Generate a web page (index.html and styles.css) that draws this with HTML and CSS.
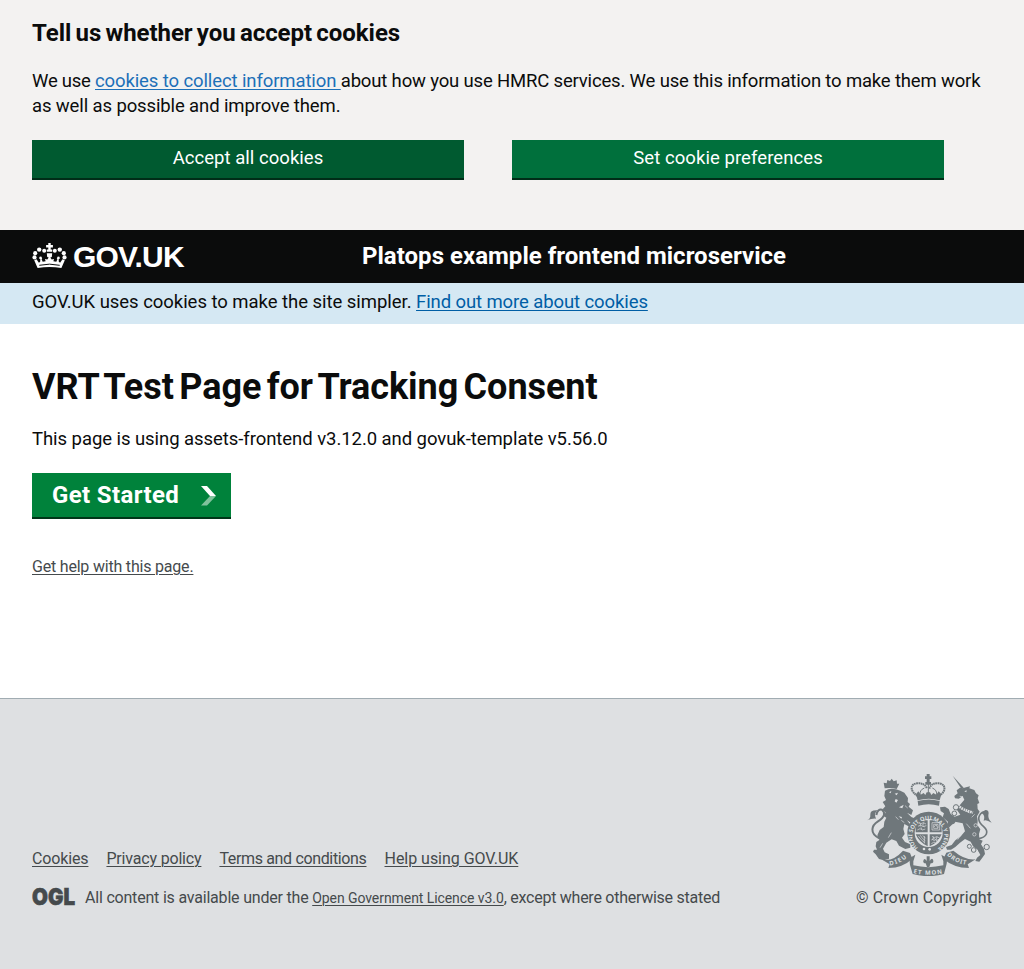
FILE: index.html
```html
<!DOCTYPE html>
<html lang="en">
<head>
<meta charset="utf-8">
<title>VRT Test Page for Tracking Consent</title>
<link rel="stylesheet" href="styles.css">
</head>
<body>
<section class="consent">
  <h2 class="consent-title">Tell us whether you accept cookies</h2>
  <p class="consent-text"><span class="t-weuse">We use </span><a class="consent-link" href="#">cookies to collect information </a><span class="t-about">about how you use HMRC services. We use this information to make them work</span><br><span class="t-aswell">as well as possible and improve them.</span></p>
  <div class="consent-actions">
    <button class="consent-button consent-button-active"><span class="t-accept">Accept all cookies</span></button>
    <button class="consent-button"><span class="t-set">Set cookie preferences</span></button>
  </div>
</section>
<header class="header">
  <a class="logo" href="#">
    <svg class="crown" viewBox="0 0 35 26" width="35" height="26" fill="#fff">
      <circle cx="2.500" cy="14.400" r="2.100"/><circle cx="3.200" cy="10.200" r="2.100"/><circle cx="7.200" cy="6.600" r="2.200"/><circle cx="12.200" cy="7.800" r="2"/>
      <circle cx="32.500" cy="14.400" r="2.100"/><circle cx="31.800" cy="10.200" r="2.100"/><circle cx="27.800" cy="6.600" r="2.200"/><circle cx="22.800" cy="7.800" r="2"/>
      <path d="M16.300 0h2.400v2h2.200v2.400h-2.200v2.200h1.500v2.200h-5.400V6.600h1.500V4.400h-2.200V2h2.200z"/>
      <path d="M5.600 25 2.200 17.200 4.500 16.300 6.900 19.700 8.200 18.700 8.300 16.100 7 15.600 7.600 13.800 9.200 13.500 10.200 15.300 9.600 16.300 10.700 18.800 13.600 18.200 13 16 15.300 16.400 16.700 14.400 15.200 13.900 14.800 10.200H20.200L19.800 13.900 18.300 14.400 19.700 16.400 22 16 21.400 18.200 24.300 18.800 25.400 16.300 24.800 15.300 25.800 13.500 27.400 13.800 28 15.600 26.700 16.100 26.800 18.700 28.100 19.700 30.500 16.300 32.800 17.200 29.400 25Q17.500 23.200 5.600 25z"/>
      <path d="M7.300 22.300Q17.500 20 27.700 22.300" fill="none" stroke="#0b0c0c" stroke-width="1"/>
    </svg>
    <span class="logo-text">GOV.UK</span>
  </a>
  <span class="service">Platops example frontend microservice</span>
</header>
<div class="cookie-bar"><p class="cookie-text"><span class="t-uses">GOV.UK uses cookies to make the site simpler. </span><a class="cookie-link" href="#">Find out more about cookies</a></p></div>
<main class="main">
  <h1 class="title">VRT Test Page for Tracking Consent</h1>
  <p class="lede">This page is using assets-frontend v3.12.0 and govuk-template v5.56.0</p>
  <a class="start" href="#"><span class="start-text">Get Started</span>
    <svg class="chevron" viewBox="0 0 16 20" width="16" height="20"><path d="M1 0h6l9 10H10z" fill="#fff"/><path d="M10 10h6L7 19.500H1z" fill="#80c29c"/></svg>
  </a>
  <p class="help"><a class="help-link" href="#">Get help with this page.</a></p>
</main>
<footer class="footer">
  <div class="footer-meta">
    <nav class="footer-nav">
      <a class="f-cookies" href="#">Cookies</a><a class="f-privacy" href="#">Privacy policy</a><a class="f-terms" href="#">Terms and conditions</a><a class="f-help" href="#">Help using GOV.UK</a>
    </nav>
    <div class="licence">
      <svg class="ogl" viewBox="0 0 43 18" width="43" height="18"><text class="ogl-text" x="0" y="16.500" textLength="43" lengthAdjust="spacingAndGlyphs">OGL</text></svg>
      <p class="licence-text"><span class="t-all">All content is available under the </span><a class="licence-link" href="#">Open Government Licence v3.0</a><span class="t-except">, except where otherwise stated</span></p>
    </div>
  </div>
  <a class="copyright" href="#">
    <svg class="crest" viewBox="51 42 375 306" width="125" height="102">
      <defs>
        <path id="motto" d="M204 264A48 48 0 1 1 266 264"/>
        <path id="dieu" d="M119 316Q152 312 176 287"/>
        <path id="mon" d="M190 339Q235 350 280 339"/>
        <path id="droit" d="M290 285Q316 312 356 315"/>
      </defs>
      <g class="ink">
        <!-- imperial crown -->
        <path d="M230 42h9v7h5v8h-5v9h4v8h-17v-8h4v-9h-5v-8h5z"/>
        <path class="beads" d="M203 108C180 94 178 72 202 70Q224 68 231 86M267 108C290 94 288 72 266 70Q244 68 238 86"/>
        <path class="line4" d="M235 72V106M210 106Q208 90 223 84M260 106Q262 90 247 84"/>
        <path d="M198 103l7-9 7 10 9-5 5 6 4-8h10l4 8 6-6 9 5 7-10 8 9-5 18q-33-10-66 0zM203 123q33-9 66 0l-2 14q-31-9-62 0z"/>
        <!-- lion -->
        <path d="M104 85l-3-17 9 2 2-10 8 3 5-7 6 8 9-3 1 10 7 0-8 16q-18-5-36-2z"/>
        <path d="M105 92Q124 80 151 92L163 98 174 114 173 126 180 132 176 140 189 151 184 165 171 158 184 171 193 175 185 190 171 181 182 195 181 202 163 192 160 207 164 222 156 233 165 246 181 253 181 263 166 267 147 257 139 243 125 238 109 248 99 266 104 277 117 283 117 296 102 301 87 297 77 283 69 275 72 269 81 269 77 259 79 246 88 240 82 226 89 210 101 201 103 185 109 173 99 167 107 158 98 148 106 139 98 126 108 120 103 108z"/>
        <path class="line6" d="M88 235C57 219 65 196 84 184C106 170 106 157 96 149Q83 146 79 165"/>
        <path d="M51 181Q62 177 61 164Q60 149 84 151Q70 158 78 176Q66 175 51 181z"/>
        <!-- unicorn -->
        <path d="M308 47l33 36-6 5z"/>
        <path d="M320 91l10-8 8 2 10-3 12-3-2 6 15 5 5 10 8 6-3 9 5 14-6 3 1 15 6 8-8 14 2 13-1 13 9 13-4 14 1 16 10 4-5 11 9 14 3 15-9 13-8 10-12-2 5-10 10-8-8-16-14-10-7-14-17-8-15 11-14 13-13 8-12 0-3-8 17-6 11-14 17-13 12-14-7-24-23-5-17 17-7-7 3-10-16-13 4-12-10-7-2-11 15-2 11 7 6 15 12 8 17-6-10-14 7-13 15-18-5-10-12 7-11-1-2-7 10-8z"/>
        <path class="line5" d="M385 236C411 232 418 215 401 200C382 185 382 168 397 157Q412 153 408 172"/>
        <path d="M425 188Q408 177 401 182Q407 165 394 158L406 150Q419 150 415 166Q414 177 425 188z"/>
        <!-- garter and ribbon -->
        <circle cx="236" cy="219" r="64"/>
        <path d="M94 298Q128 307 159 272L180 279 187 296Q159 323 115 324L119 313z"/>
        <path d="M377 298Q346 302 310 272L289 278 280 296Q310 323 357 324L353 313z"/>
        <path d="M178 295L196 284 190 304 190 316Q235 327 280 316L280 304 274 284 292 295 290 311 282 342Q235 355 188 342L180 315z"/>
      </g>
      <g class="paper">
        <path d="M117 97l7-4-2 7zM134 101l10-3-4 8zM137 117l7 3-5 8-5-4zM147 142l14-8-4 11zM154 176l-8-7 10 2zM343 94l7-3-1 6z"/>
        <circle cx="236" cy="219" r="42"/>
      </g>
      <g class="ink">
        <path d="M200 181h33v36h-36Q195 198 200 181zM239 181h32Q276 197 275 217H239zM197 223h36v36Q208 248 197 223zM239 223h36Q263 250 239 259z"/>
        <path d="M230 289h9v14q8-13 11-1 1 8-8 8l-4 11h-7l-4-11q-9-1-7-8 3-11 10 1z"/>
      </g>
      <g class="engraving">
        <path d="M206 187l7 4 7-3 8 4M204 199l7-4 8 5 10-3M202 210l8-4 7 4 9-3M208 188l5 7-3 5M221 188l-3 8 6 5M213 202l3 6M246 188h23v22h-23zM251 193h13v12h-13zM252 201l6-7 5 9M205 228q8 12 19 20M211 226q6 11 15 16M218 226l9 9M223 250V228M246 229l7 4 7-3 9 4M244 240l8-4 8 5 8-3M244 251l7-4 8 3M251 230l-3 9 7 4M261 230l-3 10 4 8"/>
        <path d="M137 170l8 9M154 181l9 7M165 137l8 7M124 218l-9 15M329 109l10 1M348 151l10 8M349 191l12 14M374 163l-9 9M332 227l-9 12M98 250l-8 13"/>
        <path class="collar" d="M324 136Q337 150 369 158"/>
        <circle cx="377" cy="196" r="5"/><circle cx="373" cy="223" r="5"/>
      </g>
      <g class="chain"><circle cx="318" cy="142" r="8"/><circle cx="313" cy="160" r="7"/><circle cx="308" cy="184" r="7"/><circle cx="358" cy="259" r="6"/><circle cx="371" cy="270" r="7"/><circle cx="392" cy="269" r="7"/><circle cx="410" cy="261" r="8"/></g>
      <g class="crest-text">
        <text class="motto"><textPath href="#motto" textLength="238">HONI SOIT QUI MAL Y PENSE</textPath></text>
        <text><textPath href="#dieu" textLength="57">DIEU</textPath></text>
        <text><textPath href="#mon" textLength="88">ET MON</textPath></text>
        <text><textPath href="#droit" textLength="66">DROIT</textPath></text>
        <circle cx="222" cy="267" r="4"/><circle cx="239" cy="268" r="4"/>
      </g>
    </svg>
    <span class="copyright-text">© Crown Copyright</span>
  </a>
</footer>
</body>
</html>
```
FILE: styles.css
```css
* { box-sizing: border-box; }
body { margin: 0; background: #fff; color: #0b0c0c; font-family: Roboto, "Noto Sans", sans-serif; font-size: 18.500px; line-height: 25px; white-space: nowrap; }
h1, h2, p { margin: 0; }
.consent { height: 230px; padding: 18px 32px 0; background: #f3f2f1; }
.consent-title { height: 30px; font: 700 24px/30px Roboto, sans-serif; letter-spacing: -0.050px; word-spacing: -1.600px; }
.consent-text { margin-top: 21px; height: 50px; }
.t-weuse { letter-spacing: -0.240px; }
.consent-link { color: #1d70b8; letter-spacing: -0.110px; text-decoration-thickness: 1px; text-underline-offset: 2px; }
.t-about { letter-spacing: -0.165px; }
.t-aswell { letter-spacing: -0.120px; }
.t-set { letter-spacing: 0.070px; }
.t-accept { letter-spacing: 0.030px; }
.consent-actions { display: flex; gap: 48px; margin-top: 21px; }
.consent-button { width: 432px; height: 40px; padding: 0 0 2px; border: 0; border-bottom: 2px solid #002d18; background: #00703c; color: #fff; font: inherit; line-height: 25px; }
.consent-button-active { background: #005a30; }
.header { display: flex; height: 53px; padding: 0 32px; background: #0b0c0c; color: #fff; }
.logo { display: flex; width: 330px; gap: 6px; color: #fff; text-decoration: none; }
.crown { margin-top: 13px; }
.logo-text { font: 700 30px/53px "Liberation Sans", sans-serif; letter-spacing: -0.800px; }
.service { font: 700 24px/53px Roboto, sans-serif; letter-spacing: 0.020px; }
.cookie-bar { height: 41px; padding: 7px 32px 0; background: #d5e8f3; }
.t-uses { letter-spacing: -0.040px; }
.cookie-link { color: #005ea5; letter-spacing: -0.100px; text-decoration-thickness: 1px; text-underline-offset: 2px; }
.main { height: 374px; padding: 42px 32px 0; }
.title { height: 42px; font: 700 36px/42px Roboto, sans-serif; letter-spacing: -0.050px; word-spacing: -3.500px; }
.lede { margin-top: 19px; height: 25px; letter-spacing: -0.060px; }
.start { display: flex; width: 199px; height: 46px; margin-top: 21px; padding: 0 15px 0 20px; justify-content: space-between; border-bottom: 2px solid #003618; background: #00823b; color: #fff; text-decoration: none; font: 700 24px/44px Roboto, sans-serif; }
.start-text { letter-spacing: 0.360px; }
.chevron { margin-top: 13px; }
.help { margin-top: 36px; font-size: 16px; line-height: 24px; letter-spacing: -0.200px; }
.help-link { color: #454a4d; text-decoration-thickness: 1px; text-underline-offset: 2px; }
.footer { display: flex; justify-content: space-between; height: 271px; padding: 75px 32px 0; border-top: 1px solid #a1acb2; background: #dee0e2; color: #454a4c; font-size: 16px; line-height: 20px; }
.footer-meta { padding-top: 75px; }
.footer a { color: #454a4c; text-decoration-thickness: 1px; text-underline-offset: 2px; }
.footer-nav { display: flex; gap: 18px; }
.f-cookies { letter-spacing: -0.140px; }
.f-privacy { letter-spacing: -0.180px; }
.f-terms { letter-spacing: -0.350px; }
.f-help { letter-spacing: -0.030px; }
.licence { display: flex; gap: 10px; margin-top: 19px; }
.ogl { overflow: visible; }
.ogl-text { font: 900 23px Inter, sans-serif; fill: #454a4c; stroke: #454a4c; stroke-width: 0.600px; }
.t-all { letter-spacing: -0.200px; }
.t-except { letter-spacing: -0.260px; }
.licence-link { font-size: 14px; letter-spacing: -0.070px; }
.footer .copyright { display: flex; flex-direction: column; align-items: flex-end; width: 136px; text-decoration: none; }
.copyright-text { margin-top: 12px; letter-spacing: 0.090px; }
.ink { fill: #6f777b; stroke: none; }
.paper { fill: #dee0e2; }
.beads, .line4, .line5, .line6, .chain, .engraving { fill: none; stroke: #6f777b; }
.beads { stroke-width: 6px; stroke-dasharray: 5 1.500; }
.line4 { stroke-width: 3px; }
.line5 { stroke-width: 5px; }
.line6 { stroke-width: 6px; }
.chain { stroke-width: 3px; }
.engraving { stroke: #dee0e2; stroke-width: 2px; }
.collar { stroke-width: 8px; stroke-dasharray: 5 2; }
.crest-text { fill: #dee0e2; font: 700 18px "Noto Sans", sans-serif; }
.motto { font-size: 17px; }
```
